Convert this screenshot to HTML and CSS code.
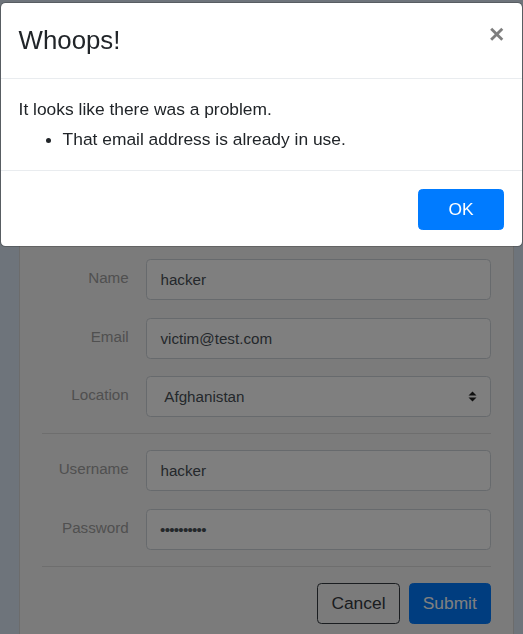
FILE: index.html
```html
<!DOCTYPE html>
<html lang="en">
<head>
<meta charset="utf-8">
<title>Register</title>
<link rel="stylesheet" href="styles.css">
</head>
<body>
<div class="page">
  <form class="card">
    <div class="field">
      <label class="field-label" for="name">Name</label>
      <input class="control" id="name" type="text" value="hacker">
    </div>
    <div class="field">
      <label class="field-label" for="email">Email</label>
      <input class="control" id="email" type="email" value="victim@test.com">
    </div>
    <div class="field">
      <label class="field-label" for="location">Location</label>
      <div class="select-wrap">
        <select class="control select" id="location">
          <option>Afghanistan</option>
        </select>
        <svg class="select-arrow" width="9" height="11" viewBox="0 0 9 11" aria-hidden="true">
          <polygon points="4.5,0.5 8.5,4.5 0.5,4.5" fill="#222"/>
          <polygon points="0.5,6.5 8.5,6.5 4.5,10.5" fill="#222"/>
        </svg>
      </div>
    </div>
    <hr class="divider">
    <div class="field">
      <label class="field-label" for="username">Username</label>
      <input class="control" id="username" type="text" value="hacker">
    </div>
    <div class="field">
      <label class="field-label" for="password">Password</label>
      <input class="control password" id="password" type="password" value="aaaaaaaaaa">
    </div>
    <hr class="divider">
    <div class="actions">
      <button type="button" class="btn btn-outline">Cancel</button>
      <button type="button" class="btn btn-primary">Submit</button>
    </div>
  </form>
</div>

<div class="backdrop"></div>

<div class="modal" role="dialog">
  <div class="modal-header">
    <h3 class="modal-title">Whoops!</h3>
    <button type="button" class="close" aria-label="Close">×</button>
  </div>
  <div class="modal-body">
    <p class="message">It looks like there was a problem.</p>
    <ul class="errors">
      <li>That email address is already in use.</li>
    </ul>
  </div>
  <div class="modal-footer">
    <button type="button" class="btn btn-primary btn-wide">OK</button>
  </div>
</div>
</body>
</html>
```

FILE: styles.css
```css
* { box-sizing: border-box; }

html, body {
  margin: 0;
  height: 100%;
  overflow: hidden;
}

body {
  background: #dce9f6;
  font-family: "Liberation Sans", Arial, Helvetica, sans-serif;
  font-size: 17.4px;
  line-height: 1.5;
  color: #212529;
}

.page {
  padding: 236.3px 0 0 19px;
}

.card {
  width: 495px;
  background: #f7f7f7;
  border: 1px solid rgba(0, 0, 0, 0.125);
  border-radius: 4.4px;
  padding: 22px;
  display: flex;
  flex-direction: column;
}

.field {
  display: grid;
  grid-template-columns: 86.7px 1fr;
  column-gap: 17.6px;
  align-items: start;
  margin-bottom: 17.5px;
}

.field-label {
  text-align: right;
  font-size: 15.2px;
  line-height: 23px;
  padding-top: 6.9px;
  color: #a0a0a0;
}

.control {
  display: block;
  width: 100%;
  height: 41px;
  padding: 0 13.2px;
  font-family: inherit;
  font-size: 15.2px;
  line-height: 23px;
  color: #495057;
  background: #fff;
  border: 1px solid #ced4da;
  border-radius: 4.4px;
  margin: 0;
}

.password {
  letter-spacing: -0.75px;
  padding-left: 12.8px;
}

.select-wrap {
  position: relative;
}

.select {
  appearance: none;
  -webkit-appearance: none;
  padding-left: 17px;
}

.select-arrow {
  position: absolute;
  right: 13.6px;
  top: 15px;
  pointer-events: none;
}

.divider {
  border: 0;
  border-top: 1px solid rgba(0, 0, 0, 0.1);
  margin: -1.5px 0 16px;
  height: 0;
}

.actions {
  display: flex;
  justify-content: flex-end;
  gap: 8.8px;
}

.btn {
  font-family: inherit;
  font-size: 17.4px;
  line-height: 26.4px;
  padding: 6.6px 13.2px;
  border-radius: 4.4px;
  border: 1px solid transparent;
  background: transparent;
  margin: 0;
}

.btn-outline {
  border-color: #343a40;
  color: #343a40;
}

.btn-primary {
  background: #007bff;
  border-color: #007bff;
  color: #fff;
}

.btn-wide {
  padding-left: 29.8px;
  padding-right: 29.8px;
}

.backdrop {
  position: fixed;
  inset: 0;
  background: rgba(0, 0, 0, 0.5);
}

.modal {
  position: fixed;
  top: 2px;
  left: 0;
  width: 523px;
  background: #fff;
  border: 1px solid rgba(0, 0, 0, 0.2);
  border-radius: 5.3px;
  background-clip: padding-box;
}

.modal-header {
  display: flex;
  align-items: flex-start;
  padding: 17.6px;
  border-bottom: 1px solid #e9ecef;
}

.modal-title {
  margin: 0;
  font-size: 25.8px;
  line-height: 39.6px;
  font-weight: 400;
  color: #212529;
}

.close {
  margin: -17.6px -17.6px -17.6px auto;
  padding: 17.6px;
  background: transparent;
  border: 0;
  font-family: inherit;
  font-size: 26.4px;
  font-weight: 700;
  line-height: 1;
  color: #000;
  opacity: 0.5;
  text-shadow: 0 1px 0 #fff;
}

.modal-body {
  padding: 17.6px;
  font-size: 17.4px;
  line-height: 26.4px;
}

.message { margin: 0; }

.errors {
  margin: 3.5px 0 0;
  padding-left: 44px;
}

.modal-footer {
  display: flex;
  justify-content: flex-end;
  padding: 17.6px 17.6px 16px;
  border-top: 1px solid #e9ecef;
}
```
